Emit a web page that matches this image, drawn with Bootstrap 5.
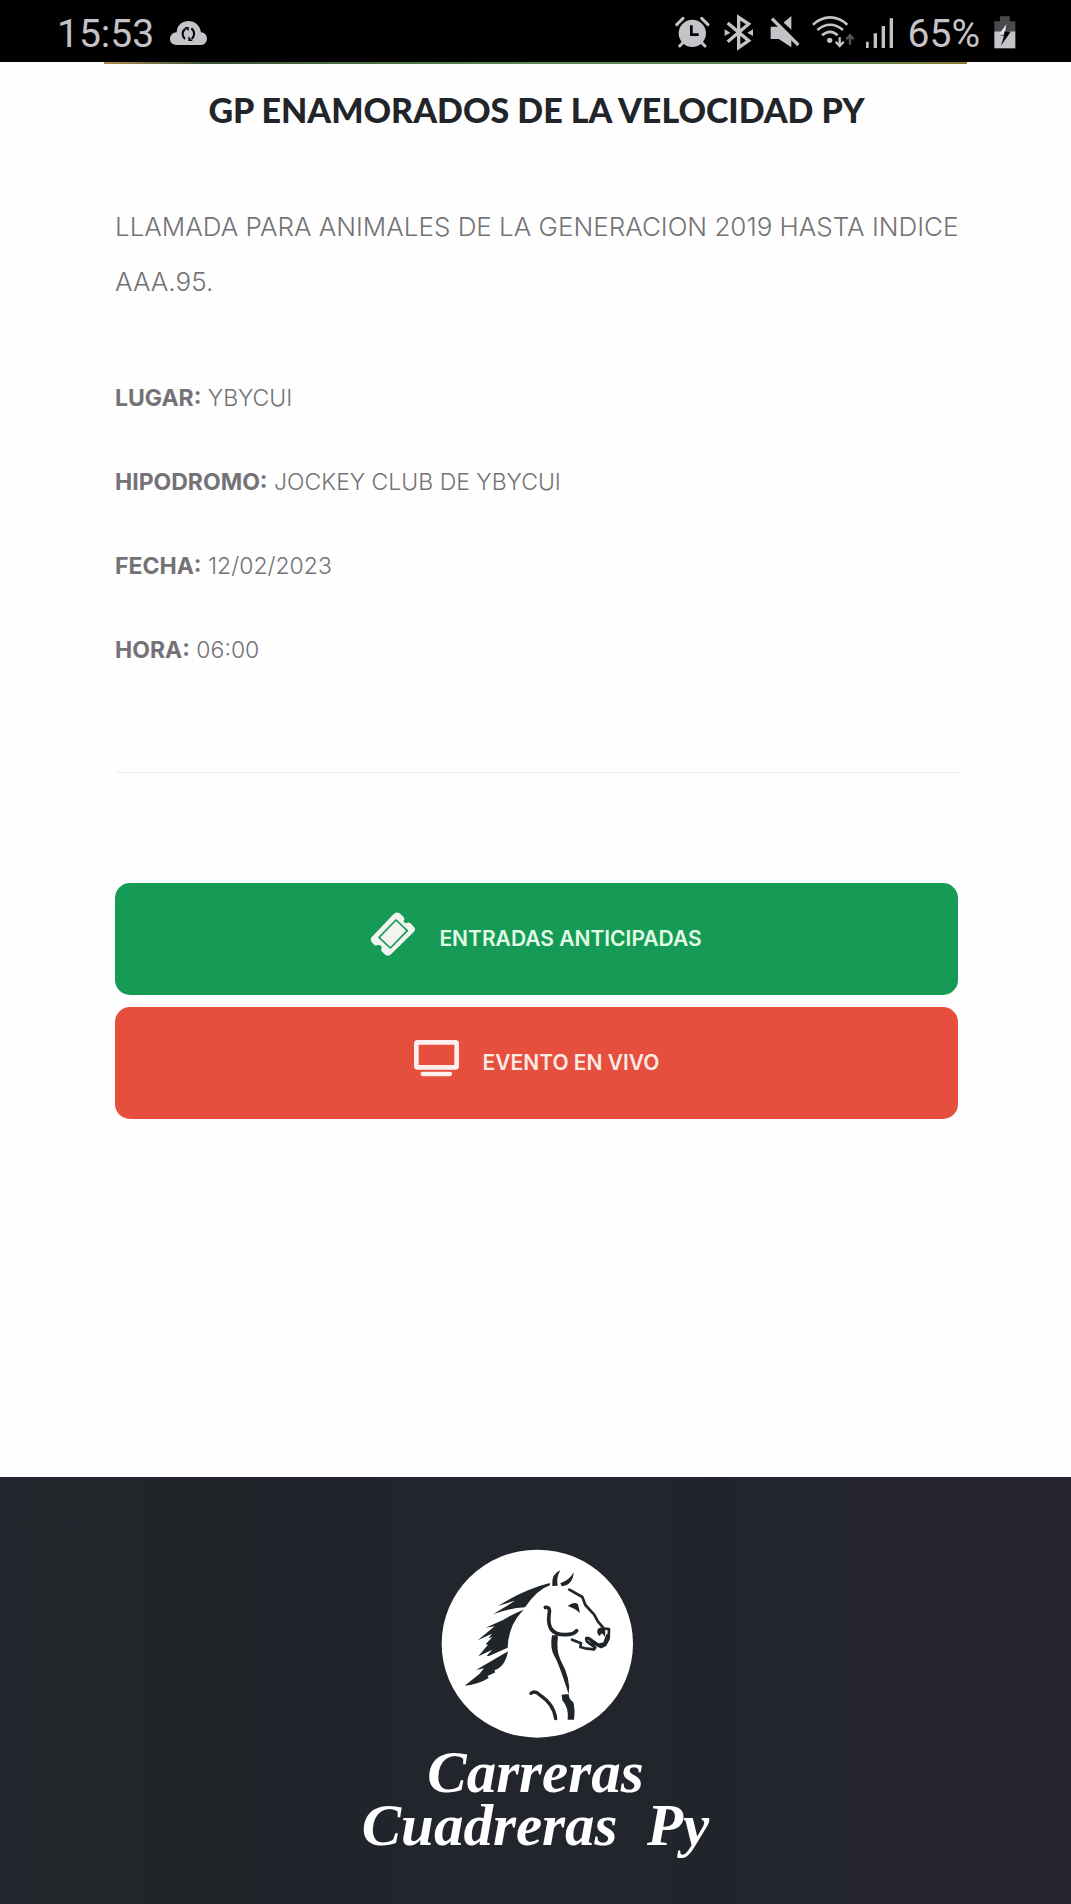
<!DOCTYPE html>
<html lang="es">
<head>
    <meta charset="UTF-8">
    <meta name="viewport" content="width=device-width, initial-scale=1.0">
    <title>Carreras Cuadreras Py</title>
    <link href="https://cdn.jsdelivr.net/npm/bootstrap@5.3.0/dist/css/bootstrap.min.css" rel="stylesheet">
    <style>
        body { background: #fefefe; color: #747276; font-family: Inter, "Open Sans", sans-serif; }
        svg { overflow: visible; flex-shrink: 0; }

        .status-bar { height: 62px; padding: 6px 55px 0 57px; background: #000; color: #c6c3c8; font: 39px/1 Roboto, sans-serif; }
        .status-icons { gap: 14px; }
        .banner-edge { height: 2px; margin: 0 104px; background: linear-gradient(90deg, #b08a50, #3c5638 12%, #5b8a50 50%, #5b8a50 85%, #8a7c30); }

        .event { padding: 0 113px 0 115px; }
        .event-title { margin: 20px 0 63px; font: 900 34px/52px Lato, sans-serif; color: #212529; }
        .event-intro { margin: 0 -8px 61px 0; font-size: 26px; line-height: 55px; font-weight: 300; }
        .event-data { margin: 0 0 94px; font-size: 23px; line-height: 56px; font-weight: 300; }
        .event-data li { margin-bottom: 28px; }
        .event-data strong { font-weight: 700; }
        .event-line { margin: 0 0 110px; border-color: #bbb8c4; }

        .btn-event { min-height: 112px; gap: 24px; border: 0; border-radius: 15px; color: #fff; font-size: 21px; font-weight: 600; }
        .btn-event:hover { color: #fff; }
        .btn-tickets, .btn-tickets:hover { background: #169b57; color: #e2fbe6; }
        .btn-live, .btn-live:hover { background: #e64e3d; color: #fdeae4; }

        .site-footer { margin-top: 358px; padding: 63px 0 20px; background: linear-gradient(90deg, #20262b, #24242d); }
        .brand { margin-top: 6px; color: #fff; font: italic bold 59px/53px "Liberation Serif", serif; }
    </style>
</head>
<body class="d-flex flex-column min-vh-100">
    <!-- Phone status bar -->
    <header class="status-bar d-flex align-items-center justify-content-between">
        <div class="d-flex align-items-center gap-3">
            <span>15:53</span>
            <svg width="37" height="24" viewBox="513 67 111 72" fill="#c6c3c8" aria-hidden="true">
                <path d="M533 136c-28 0-25-38 0-38 2-44 66-46 73 0 25 2 23 38 0 38z"/>
                <path d="M560 87c-12 8-12 22-2 31m19-32c11 8 11 23 1 32" fill="none" stroke="#000" stroke-width="6"/>
                <path d="M557 82h12v13zM581 124h-13v-14z" fill="#000"/>
            </svg>
        </div>
        <div class="status-icons d-flex align-items-center">
            <svg width="35" height="34" viewBox="50 50 105 102" fill="#c6c3c8" aria-hidden="true">
                <circle cx="102" cy="99" r="41"/>
                <path d="M55 73 74 54M149 73 130 54M73 128l-9 9M131 128l9 9" stroke="#c6c3c8" stroke-width="9" stroke-linecap="round"/>
                <path d="M99 75v28h22" fill="none" stroke="#000" stroke-width="8"/>
            </svg>
            <svg width="29" height="34" viewBox="196 50 87 102" fill="none" stroke="#c6c3c8" stroke-width="10" aria-hidden="true">
                <path d="m207 68 63 53-30 21V51l30 20-63 53"/>
                <path d="m198 87 17 10-17 10zM283 87l-17 10 17 10z" fill="#c6c3c8" stroke="none"/>
            </svg>
            <svg width="30" height="34" viewBox="325 50 90 102" fill="#c6c3c8" aria-hidden="true">
                <path d="M336 79h24l38-32v94l-38-25h-24z"/>
                <path d="m334 43 91 82" stroke="#000" stroke-width="19"/>
                <path d="m340 55 79 79" stroke="#c6c3c8" stroke-width="10"/>
            </svg>
            <svg width="40" height="34" viewBox="457 50 120 102" fill="none" stroke="#c6c3c8" stroke-width="8" aria-hidden="true">
                <path d="M463 73c31-29 72-29 103 0M476 89c24-21 53-21 77 0M490 105c17-14 32-14 47 0"/>
                <circle cx="513" cy="120" r="8" fill="#c6c3c8" stroke="none"/>
                <path d="M543 111v25m-12-12 12 13 12-13" stroke-width="7"/>
                <path d="M574 133v-27m-11 11 11-12 11 12" stroke="#555358" stroke-width="7"/>
            </svg>
            <svg width="29" height="34" viewBox="619 50 87 102" fill="#c6c3c8" aria-hidden="true">
                <path d="M622 124h8v19h-8zM645 99h10v44h-10zM669 77h10v66h-10zM693 54h10v89h-10z"/>
            </svg>
            <span>65%</span>
            <svg width="22" height="34" viewBox="1000 50 66 102" aria-hidden="true">
                <path d="M1001 93V63h17V48h29v15h17v30z" fill="#4b494e"/>
                <path d="M1001 93h63v51h-63z" fill="#c6c3c8"/>
                <path d="m1037 72-21 28h17z" fill="#e4e1e6"/>
                <path d="m1032 93-3 12h-12l13 2-9 29 29-42z" fill="#000"/>
            </svg>
        </div>
    </header>

    <!-- Event details -->
    <main>
        <div class="banner-edge"></div>
        <div class="event">
            <h1 class="event-title text-center">GP ENAMORADOS DE LA VELOCIDAD PY</h1>
            <p class="event-intro">LLAMADA PARA ANIMALES DE LA GENERACION 2019 HASTA INDICE AAA.95.</p>
            <ul class="event-data list-unstyled">
                <li><strong>LUGAR:</strong> YBYCUI</li>
                <li><strong>HIPODROMO:</strong> JOCKEY CLUB DE YBYCUI</li>
                <li><strong>FECHA:</strong> 12/02/2023</li>
                <li><strong>HORA:</strong> 06:00</li>
            </ul>
            <hr class="event-line">
            <div class="event-actions d-grid">
                <button type="button" class="btn btn-event btn-tickets d-flex align-items-center justify-content-center mb-1">
                    <svg width="44" height="54" viewBox="807 127 132 162" aria-hidden="true">
                        <path d="M873 135q10-10 20-4l11 10q6 6 1 12 0 9 9 7 6-4 12 1l10 11q7 7-1 15l-68 67q-8 8-17 1l-10-9q-5-5-1-12-1-10-11-8-6 4-12-1l-7-8q-6-8 1-16z" fill="#f3f3ef"/>
                        <path d="m882 151 34 32-51 52-34-32z" fill="none" stroke="#169b57" stroke-width="5" stroke-linejoin="round"/>
                    </svg>
                    <span>ENTRADAS ANTICIPADAS</span>
                </button>
                <button type="button" class="btn btn-event btn-live d-flex align-items-center justify-content-center mt-2">
                    <svg width="45" height="46" viewBox="940 513 135 138" fill="none" stroke="#fdf0ec" aria-hidden="true">
                        <rect x="947" y="520" width="121" height="75" rx="4" stroke-width="14"/>
                        <path d="M966 615h82" stroke-width="13" stroke-linecap="round"/>
                    </svg>
                    <span>EVENTO EN VIVO</span>
                </button>
            </div>
        </div>
    </main>

    <!-- Footer logo -->
    <footer class="site-footer flex-grow-1 text-center">
        <svg width="210" height="200" viewBox="0 0 630 600" fill="#20252a" role="img" aria-label="Caballo">
            <ellipse cx="319" cy="311" rx="287" ry="282" fill="#fff"/>
            <!-- ears -->
            <path d="M388 91q-28 10-24 47l16-1q-5-24 8-46zM428 97q-12 23-40 33l4 9q34-4 36-42z"/>
            <!-- mane -->
            <path d="M356 129q-78 20-155 69l51-16-12 8-54 33q49-19 96-21 37-54 75-66z"/>
            <path d="M278 209q-34 13-62 31l-52 23 27-4-51 42 43-20-11 14 12-4-20 22 7 1-29 35 42-20-17 18 7 1 56-25q2-69 48-114z"/>
            <path d="m231 334-96 56 24-5-14 17-44 35q42-4 72-23l-3-6 23-11-3-6q33-11 41-57z"/>
            <!-- head, jaw and neck -->
            <g fill="none" stroke="#20252a" stroke-linecap="round" stroke-linejoin="round">
                <path d="m415 149 39 22 9 24 26 28 12 22 18 21 15 1-1 29-10 19-13 6-20-10-17-15q-12-7-5 9l25 18-4 5-27-3-14-4 2-11-27-11" stroke-width="8"/>
                <path d="M343 202q17-3 11 23-7 59 46 59 28 1 37-12" stroke-width="11"/>
                <path d="m473 295 29 20 18-4 9-24" stroke-width="9"/>
                <path d="M300 460q12-10 25 4 44 29 49 72" stroke-width="10"/>
            </g>
            <path d="M410 198q20-15 31-5l6 26q-14-13-37-21zM500 268q12-12 23 4l-1 18-9-10-8 8q-9-8-5-20z"/>
            <path d="M363 286h18q-6 49 8 75 32 58 24 102-30-94-43-115-14-24-7-62zM392 464l21-2q1 16 14 25 6 24 2 52h-19q4-35-16-58z"/>
        </svg>
        <div class="brand">Carreras<br>Cuadreras&nbsp; Py</div>
    </footer>

    <script src="https://cdn.jsdelivr.net/npm/bootstrap@5.3.0/dist/js/bootstrap.bundle.min.js"></script>
</body>
</html>
